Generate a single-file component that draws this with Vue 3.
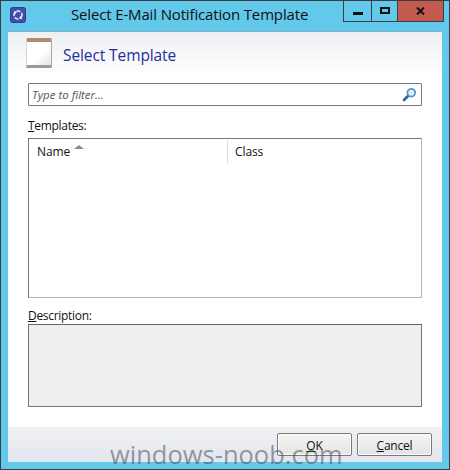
<template>
  <div class="window">
    <div class="titlebar">
      <svg class="app-icon" width="16" height="16" viewBox="0 0 16 16">
        <rect x="0.5" y="0.5" width="15" height="15" rx="2" fill="#4050aa" stroke="#2f3c8e" />
        <circle cx="8" cy="8" r="4" fill="none" stroke="#e6e9f7" stroke-width="1.6" stroke-dasharray="4 1.6" />
        <path d="M4 4l3 1-2 2zM12 12l-3-1 2-2z" fill="#fff" />
      </svg>
      <div class="title">Select E-Mail Notification Template</div>
      <div class="controls">
        <div class="ctl ctl-min"><span class="min-glyph"></span></div>
        <div class="ctl ctl-max"><span class="max-glyph"></span></div>
        <div class="ctl ctl-close">
          <svg width="9" height="8" viewBox="0 0 9 8">
            <path d="M1 0.5l7 7M8 0.5l-7 7" stroke="#111" stroke-width="2" fill="none" />
          </svg>
        </div>
      </div>
    </div>

    <div class="client">
      <div class="content">
        <div class="header">
          <div class="book"></div>
          <div class="heading">Select Template</div>
        </div>

        <div class="filter">
          <span class="filter-text">Type to filter...</span>
          <svg width="15" height="15" viewBox="0 0 15 15">
            <path d="M2 13l4-4" stroke="#2f62a8" stroke-width="2.6" stroke-linecap="round" />
            <circle cx="9.3" cy="5.7" r="3.9" fill="#dcecf8" stroke="#5a94cf" stroke-width="1.8" />
          </svg>
        </div>

        <div class="label label-templates"><u>T</u>emplates:</div>
        <div class="list">
          <div class="list-head">
            <div class="col col-name">
              Name
              <span class="sort"></span>
            </div>
            <div class="col col-class">Class</div>
          </div>
        </div>

        <div class="label label-desc"><u>D</u>escription:</div>
        <div class="desc"></div>
      </div>

      <div class="footer">
        <button type="button" class="btn"><u>O</u>K</button>
        <button type="button" class="btn"><u>C</u>ancel</button>
      </div>
    </div>

    <div class="watermark">windows-noob.com</div>
  </div>
</template>

<script setup>
</script>

<style>
html,
body {
  margin: 0;
  background: #fff;
}
</style>

<style scoped>
.window {
  position: relative;
  box-sizing: border-box;
  width: 450px;
  height: 470px;
  border: 1px solid #3a3f44;
  background: #63c9ea;
  padding: 0 7px 7px;
  display: flex;
  flex-direction: column;
  overflow: hidden;
  font-family: "Open Sans", "Noto Sans", sans-serif;
  color: #111;
}

.titlebar {
  height: 30px;
  display: flex;
  flex-shrink: 0;
  align-items: flex-start;
  position: relative;
}

.app-icon {
  margin-top: 6px;
  margin-left: 2px;
}

.title {
  position: absolute;
  left: 63px;
  top: 3px;
  font-size: 15px;
  line-height: 20px;
  color: #111;
  letter-spacing: -0.15px;
  white-space: nowrap;
}

.controls {
  position: absolute;
  top: 0;
  right: -2px;
  display: flex;
  height: 20px;
  border: 1px solid #3a3f44;
  border-top: none;
}

.ctl {
  display: flex;
  align-items: center;
  justify-content: center;
  border-left: 1px solid #3a3f44;
  height: 20px;
}

.ctl:first-child {
  border-left: none;
}

.ctl-min {
  width: 27px;
}

.ctl-max {
  width: 25px;
}

.ctl-close {
  width: 45px;
  background: #c25a50;
}

.min-glyph {
  width: 10px;
  height: 3px;
  background: #111;
  margin-top: 5px;
}

.max-glyph {
  box-sizing: border-box;
  width: 10px;
  height: 7px;
  border: 2px solid #111;
  margin-bottom: 1px;
}

.client {
  flex: 1;
  display: flex;
  flex-direction: column;
  background: #fff;
  border-top: 1px solid #7fb2c8;
}

.content {
  flex: 1;
  padding: 0 20px;
  background: linear-gradient(#eeeff4, #fff 44px) no-repeat;
}

.header {
  height: 51px;
  display: flex;
  align-items: flex-start;
  gap: 11px;
  margin-left: -2px;
}

.book {
  box-sizing: border-box;
  width: 26px;
  height: 30px;
  margin-top: 6px;
  background: linear-gradient(135deg, #fff 55%, #e4e4e4);
  border-top: 4px solid #b08a72;
  border-bottom: 3px solid #9a9a9a;
  border-left: 1px solid #d8d8d8;
  border-right: 1px solid #a8a8a8;
  border-radius: 2px 2px 1px 1px;
}

.heading {
  margin-top: 12px;
  font-size: 15.5px;
  line-height: 22px;
  color: #1d2f9a;
  letter-spacing: -0.1px;
}

.filter {
  box-sizing: border-box;
  height: 23px;
  border: 1px solid #777;
  border-radius: 1px;
  display: flex;
  align-items: center;
  justify-content: space-between;
  padding: 0 4px 0 3px;
  background: #fff;
}

.filter-text {
  font-size: 11.5px;
  font-style: italic;
  color: #555;
}

.label {
  font-size: 12px;
  line-height: 16px;
  letter-spacing: -0.3px;
  color: #111;
}

.label-templates {
  margin-top: 12px;
}

.label-desc {
  margin-top: 10px;
}

.list {
  box-sizing: border-box;
  height: 160px;
  margin-top: 4px;
  border: 1px solid #777;
  border-right-color: #b5b5b5;
  border-bottom-color: #b5b5b5;
  background: #fff;
}

.list-head {
  display: flex;
  height: 24px;
  font-size: 12px;
  line-height: 24px;
  letter-spacing: -0.1px;
}

.col-name {
  position: relative;
  width: 190px;
  padding-left: 8px;
  margin-top: 1px;
  border-right: 1px solid #dcdcdc;
}

.col-class {
  padding-left: 7px;
  margin-top: 1px;
}

.sort {
  position: absolute;
  left: 45px;
  top: 5px;
  width: 0;
  height: 0;
  border-left: 5px solid transparent;
  border-right: 5px solid transparent;
  border-bottom: 4px solid #8a8a8a;
}

.desc {
  box-sizing: border-box;
  height: 83px;
  background: #eee;
  border: 1px solid #777;
  border-top-color: #666;
}

.footer {
  height: 35px;
  flex-shrink: 0;
  display: flex;
  justify-content: flex-end;
  align-items: center;
  gap: 5px;
  padding-right: 10px;
  background: linear-gradient(#f1f1f3, #e2e6ef);
}

.btn {
  box-sizing: border-box;
  width: 75px;
  height: 23px;
  padding: 1px 0 0;
  font-family: inherit;
  font-size: 12px;
  letter-spacing: -0.2px;
  color: #111;
  border: 1px solid #7a7a7a;
  border-radius: 2px;
  background: linear-gradient(#f4f4f4, #e4e4e4);
  box-shadow: inset 0 0 0 1px #fbfbfb;
}

.watermark {
  position: absolute;
  left: 109px;
  top: 438px;
  font-family: "Open Sans", sans-serif;
  font-size: 25.5px;
  line-height: 30px;
  color: rgba(70, 75, 80, 0.55);
  white-space: nowrap;
  pointer-events: none;
}
</style>
